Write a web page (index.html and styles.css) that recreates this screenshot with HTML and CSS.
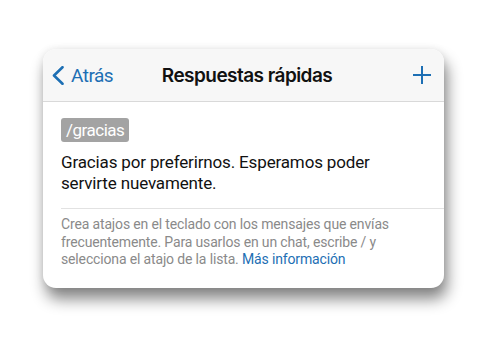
FILE: index.html
```html
<!DOCTYPE html>
<html lang="es">
<head>
<meta charset="utf-8">
<link rel="stylesheet" href="styles.css">
</head>
<body>
<div class="card">
  <div class="header">
    <div class="back">
      <svg class="chev" width="12" height="19" viewBox="0 0 12 19"><path d="M10.5 1.2 L2 9.5 L10.5 17.8" fill="none" stroke="#1d6fb4" stroke-width="2.6" stroke-linecap="round" stroke-linejoin="round"/></svg>
      <span>Atrás</span>
    </div>
    <div class="title">Respuestas rápidas</div>
    <div class="add">
      <svg width="20" height="20" viewBox="0 0 20 20"><path d="M10 1 V19 M1 10 H19" fill="none" stroke="#1d6fb4" stroke-width="2"/></svg>
    </div>
  </div>
  <div class="body">
    <div class="tag">/gracias</div>
    <p class="msg">Gracias por preferirnos. Esperamos poder servirte nuevamente.</p>
    <div class="divider"></div>
    <p class="help">Crea atajos en el teclado con los mensajes que envías frecuentemente. Para usarlos en un chat, escribe / y selecciona el atajo de la lista. <a class="link">Más información</a></p>
  </div>
</div>
</body>
</html>
```
FILE: styles.css
```css
html, body {
  margin: 0;
  padding: 0;
  background: #ffffff;
}
body {
  font-family: Roboto, "Noto Sans", sans-serif;
  padding: 49px 0 0 43px;
  min-height: 340px;
  box-sizing: border-box;
}
.card {
  width: 401px;
  height: 239px;
  background: #ffffff;
  border-radius: 13px;
  overflow: hidden;
  box-shadow: 3px 11px 15px rgba(0,0,0,0.48), 0 0 8px rgba(0,0,0,0.08);
}
.header {
  height: 52px;
  background: #f7f7f7;
  border-bottom: 1px solid #d9d9d9;
  display: grid;
  grid-template-columns: 1fr auto 1fr;
  align-items: center;
}
.back {
  display: flex;
  align-items: center;
  gap: 7px;
  padding-left: 9px;
  color: #1d6fb4;
  font-size: 19px;
  letter-spacing: -0.5px;
}
.chev {
  display: block;
}
.title {
  font-family: Inter, Roboto, sans-serif;
  font-size: 19px;
  font-weight: 600;
  color: #111111;
  letter-spacing: -0.55px;
  padding-left: 7px;
}
.add {
  display: flex;
  justify-content: flex-end;
  padding-right: 12px;
}
.add svg {
  display: block;
}
.body {
  padding: 16px 0 0 18px;
}
.tag {
  display: inline-block;
  height: 24px;
  line-height: 24px;
  padding: 0 5px;
  background: #a3a3a3;
  color: #ffffff;
  font-size: 17px;
  letter-spacing: -0.5px;
  border-radius: 3px;
}
.msg {
  margin: 10px 20px 0 0;
  font-size: 17px;
  line-height: 21px;
  letter-spacing: -0.15px;
  color: #111111;
}
.divider {
  margin-top: 14px;
  height: 1px;
  background: #e2e2e2;
}
.help {
  margin: 7px 20px 0 0;
  font-size: 14px;
  line-height: 17.5px;
  letter-spacing: -0.15px;
  color: #8a8a8a;
}
.link {
  color: #1d6fb4;
}
```
